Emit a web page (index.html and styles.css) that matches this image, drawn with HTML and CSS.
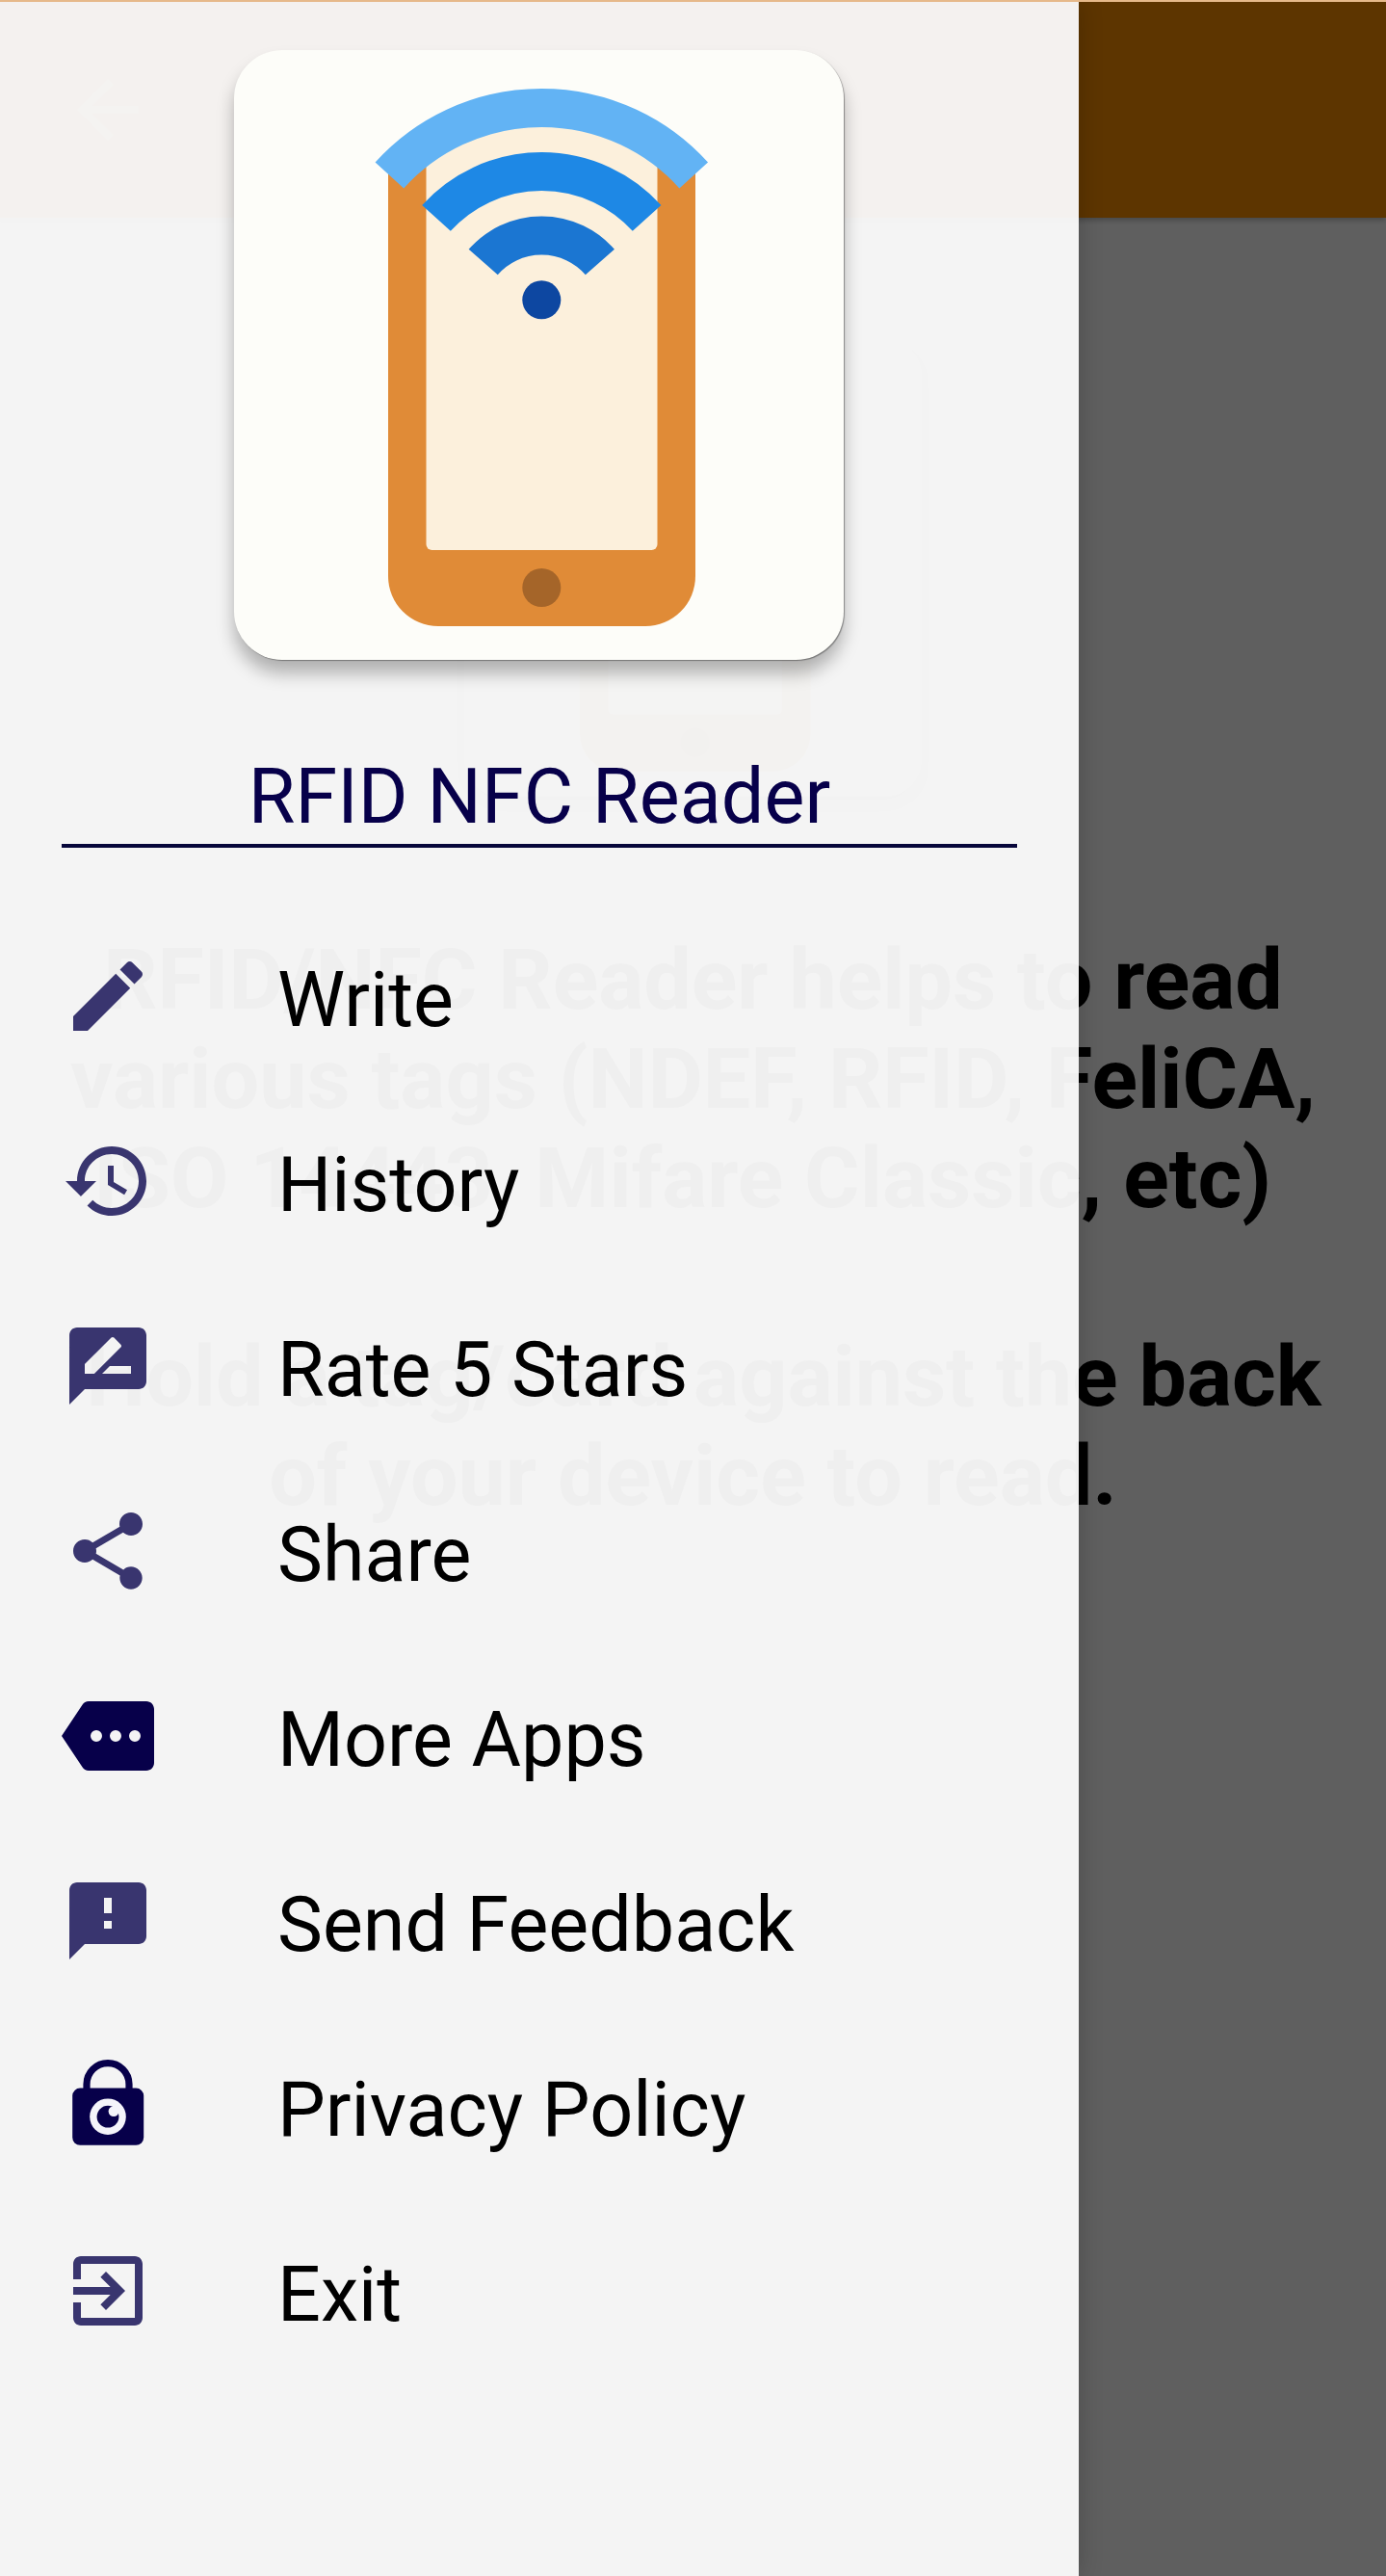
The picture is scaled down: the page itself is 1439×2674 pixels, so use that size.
FILE: index.html
```
<!DOCTYPE html>
<html lang="en">
<head>
  <meta charset="UTF-8">
  <title>RFID NFC Reader</title>
  <meta name="viewport" content="width=device-width, initial-scale=1.0">
  <link rel="stylesheet" href="styles.css">
</head>
<body>
  <svg width="0" height="0" class="defs">
    <symbol id="logo" viewBox="-1 0 633 633">
      <path fill="#e08b37" d="M159 125L198 95H439L478 125V546a52 52 0 0 1-52 52H211a52 52 0 0 1-52-52z"/>
      <path fill="#fcf0dc" d="M198.500 78H438.500V513a6 6 0 0 1-6 6H204.500a6 6 0 0 1-6-6z"/>
      <circle cx="318.300" cy="558" r="20" fill="#a56529"/>
      <g fill="none" stroke-width="40">
        <path stroke="#62b3f4" d="M160.400 130A213 213 0 0 1 476.200 130"/>
        <path stroke="#1e88e5" d="M209 174.400A147.600 147.600 0 0 1 427.600 174.400"/>
        <path stroke="#1b76d2" d="M257.700 220A80.500 80.500 0 0 1 378.900 220"/>
      </g>
      <circle cx="318.300" cy="259.300" r="20" fill="#0d47a1"/>
    </symbol>
  </svg>

  <div class="app">
    <header class="toolbar">
      <svg class="icon" viewBox="0 0 24 24"><path d="M20 11H7.830l5.590-5.590L12 4l-8 8 8 8 1.410-1.410L7.830 13H20v-2z"/></svg>
    </header>
    <main class="content">
      <div class="content-card"><svg class="logo"><use href="#logo"/></svg></div>
      <p class="intro">RFID/NFC Reader helps to read<br>various tags (NDEF, RFID, FeliCA,<br>ISO 14443, Mifare Classic, etc)&nbsp;<br><br>&nbsp;Hold a tag/card against the back<br>of your device to read.</p>
    </main>
    <div class="scrim"></div>

    <aside class="drawer">
      <div class="drawer-card"><svg class="logo"><use href="#logo"/></svg></div>
      <h1 class="drawer-title">RFID NFC Reader</h1>
      <ul class="menu">
        <li class="menu-item">
          <svg class="icon" viewBox="0 0 24 24"><path d="M3 17.250V21h3.750L17.810 9.940l-3.750-3.750L3 17.250zM20.710 7.040c.39-.39.39-1.020 0-1.410l-2.340-2.340c-.39-.39-1.020-.39-1.410 0l-1.830 1.830 3.750 3.750 1.830-1.830z"/></svg>
          <span>Write</span>
        </li>
        <li class="menu-item">
          <svg class="icon" viewBox="0 0 24 24"><path d="M13 3c-4.970 0-9 4.030-9 9H1l3.890 3.890.07.14L9 12H6c0-3.870 3.130-7 7-7s7 3.130 7 7-3.130 7-7 7c-1.930 0-3.680-.79-4.940-2.060l-1.420 1.420C8.270 19.990 10.510 21 13 21c4.970 0 9-4.030 9-9s-4.030-9-9-9zm-1 5v5l4.280 2.540.72-1.210-3.500-2.080V8H12z"/></svg>
          <span>History</span>
        </li>
        <li class="menu-item">
          <svg class="icon" viewBox="0 0 24 24"><path d="M20 2H4c-1.100 0-1.990.9-1.990 2L2 22l4-4h14c1.100 0 2-.9 2-2V4c0-1.100-.9-2-2-2zM6 14v-2.470l6.880-6.880c.2-.2.51-.2.71 0l1.770 1.770c.2.2.2.51 0 .71L8.470 14H6zm12 0h-7.500l2-2H18v2z"/></svg>
          <span>Rate 5 Stars</span>
        </li>
        <li class="menu-item">
          <svg class="icon" viewBox="0 0 24 24"><path d="M18 16.080c-.76 0-1.440.3-1.960.77L8.910 12.700c.05-.23.09-.46.09-.7s-.04-.47-.09-.7l7.050-4.110c.54.5 1.250.81 2.040.81 1.660 0 3-1.340 3-3s-1.340-3-3-3-3 1.340-3 3c0 .24.04.47.09.7L8.040 9.810C7.500 9.310 6.790 9 6 9c-1.660 0-3 1.340-3 3s1.340 3 3 3c.79 0 1.500-.31 2.040-.81l7.120 4.160c-.05.21-.08.43-.08.65 0 1.610 1.310 2.920 2.920 2.920s2.920-1.310 2.920-2.920-1.310-2.920-2.920-2.920z"/></svg>
          <span>Share</span>
        </li>
        <li class="menu-item">
          <svg class="icon icon-dark" viewBox="0 0 24 24"><path fill-rule="evenodd" d="M22 3H7c-.69 0-1.230.35-1.590.88L0 12l5.410 8.110c.36.53.9.89 1.590.89h15c1.100 0 2-.9 2-2V5c0-1.100-.9-2-2-2zM9 13.500a1.500 1.500 0 1 1 0-3 1.500 1.500 0 0 1 0 3zm5 0a1.500 1.500 0 1 1 0-3 1.500 1.500 0 0 1 0 3zm5 0a1.500 1.500 0 1 1 0-3 1.500 1.500 0 0 1 0 3z"/></svg>
          <span>More Apps</span>
        </li>
        <li class="menu-item">
          <svg class="icon" viewBox="0 0 24 24"><path d="M20 2H4c-1.100 0-1.990.9-1.990 2L2 22l4-4h14c1.100 0 2-.9 2-2V4c0-1.100-.9-2-2-2zm-7 12h-2v-2h2v2zm0-4h-2V6h2v4z"/></svg>
          <span>Send Feedback</span>
        </li>
        <li class="menu-item">
          <svg class="icon icon-dark" viewBox="0 0 24 24">
            <path fill="none" stroke="#07004a" stroke-width="1.800" d="M6.500 8V6.400a5.500 5.500 0 0 1 11 0V8"/>
            <rect x="2.800" y="7.400" width="18.500" height="14.800" rx="2"/>
            <circle cx="12" cy="14.800" r="4.700" fill="#f4f4fa"/>
            <circle cx="12" cy="14.800" r="2.850"/>
            <circle cx="13.500" cy="13.400" r="1.350" fill="#f4f4fa"/>
          </svg>
          <span>Privacy Policy</span>
        </li>
        <li class="menu-item">
          <svg class="icon" viewBox="0 0 24 24"><path d="M10.090 15.590L11.500 17l5-5-5-5-1.410 1.410L12.670 11H3v2h9.670l-2.580 2.590zM19 3H5c-1.110 0-2 .9-2 2v4h2V5h14v14H5v-4H3v4c0 1.100.89 2 2 2h14c1.100 0 2-.9 2-2V5c0-1.100-.9-2-2-2z"/></svg>
          <span>Exit</span>
        </li>
      </ul>
    </aside>
  </div>
</body>
</html>
```
FILE: styles.css
```
* {
  box-sizing: border-box;
}
body {
  margin: 0;
  font-family: Roboto, Arial, sans-serif;
  color: #000;
}
.defs {
  position: absolute;
}
.app {
  position: relative;
  width: 1439px;
  height: 2674px;
  overflow: hidden;
  background: #eee;
  border-top: 2px solid #e6b98a;
}
.icon {
  flex: none;
  width: 96px;
  height: 96px;
  fill: #39356f;
}
.icon-dark {
  fill: #07004a;
}
.logo {
  display: block;
  width: 100%;
  height: 100%;
}

/* main screen */
.toolbar {
  display: flex;
  align-items: center;
  height: 224px;
  padding: 0 64px;
  background: #e98600;
  box-shadow: 0 2px 6px rgba(0,0,0,0.3);
}
.toolbar .icon {
  fill: rgba(255,255,255,0.5);
}
.content {
  display: flex;
  flex-direction: column;
  align-items: center;
  padding-top: 126px;
}
.content-card {
  width: 475px;
  height: 475px;
  border-radius: 38px;
  background: #fdfdf9;
  box-shadow: 0 8px 14px rgba(0,0,0,0.3);
}
.intro {
  margin: 138px 0 0;
  font-size: 88px;
  font-weight: bold;
  line-height: 103px;
  text-align: center;
  white-space: nowrap;
}
.scrim {
  position: absolute;
  inset: 0;
  background: rgba(0,0,0,0.6);
}

/* navigation drawer */
.drawer {
  position: absolute;
  top: 0;
  left: 0;
  width: 1120px;
  height: 100%;
  padding: 50px 64px 0;
  background: rgba(252,252,252,0.95);
  box-shadow: 0 0 24px rgba(0,0,0,0.2);
}
.drawer-card {
  width: 633px;
  height: 633px;
  margin-left: 179px;
  border-radius: 50px;
  background: #fdfdf9;
  box-shadow: 1px 1px 1px rgba(0,0,0,0.35), 0 14px 18px rgba(0,0,0,0.28);
}
.drawer-title {
  margin: 97px 0 0;
  height: 98px;
  border-bottom: 4px solid #07063a;
  font-size: 79px;
  font-weight: normal;
  line-height: 91px;
  letter-spacing: 0.1px;
  text-align: center;
  color: #07004a;
}
.menu {
  margin: 58px 0 0;
  padding: 0;
  list-style: none;
}
.menu-item {
  display: flex;
  align-items: center;
  gap: 128px;
  height: 192px;
  font-size: 79px;
  line-height: 92px;
}
.menu-item span {
  padding-top: 8px;
}
```
